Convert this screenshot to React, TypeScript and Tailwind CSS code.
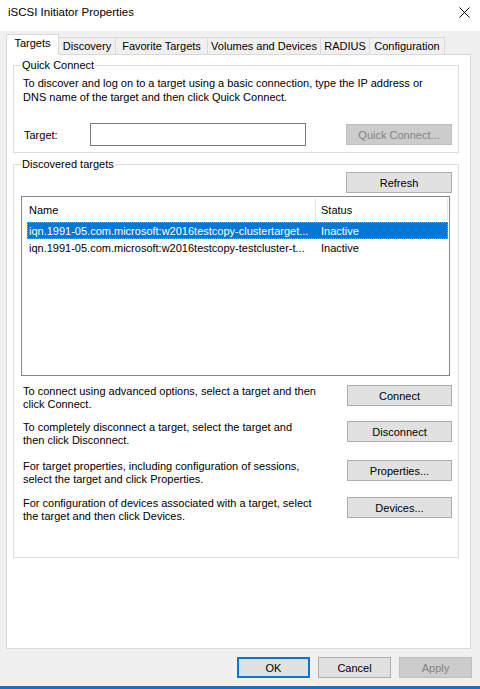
import React from "react";

function Btn({
  label,
  w = "w-[106px]",
  disabled = false,
  primary = false,
}: {
  label: string;
  w?: string;
  disabled?: boolean;
  primary?: boolean;
}) {
  const border = primary
    ? "border-2 border-[#0078d7]"
    : disabled
    ? "border border-[#bfbfbf]"
    : "border border-[#adadad]";
  const color = disabled ? "bg-[#cccccc] text-[#838383]" : "bg-[#e1e1e1] text-black";
  return (
    <div className={`flex items-center justify-center h-[21px] shrink-0 leading-[14px] ${w} ${border} ${color}`}>
      {label}
    </div>
  );
}

function ActionRow({ lines, label, mt }: { lines: string[]; label: string; mt: string }) {
  return (
    <div className={`flex items-start justify-between pr-[6px] ${mt}`}>
      <div className="leading-[13px] whitespace-nowrap">
        {lines.map((l, i) => (
          <div key={i}>{l}</div>
        ))}
      </div>
      <Btn label={label} w="w-[105px]" />
    </div>
  );
}

export default function App() {
  return (
    <div className="w-[480px] h-[689px] bg-[#f0f0f0] flex flex-col text-[11px] text-black font-['Liberation_Sans',Arial,sans-serif] overflow-hidden">
      {/* Title bar */}
      <div className="h-[31px] bg-white flex items-start justify-between pl-[8px] pr-[10px] pt-[5px] shrink-0">
        <span className="text-[11.5px] leading-[14px]">iSCSI Initiator Properties</span>
        <svg width="11" height="11" viewBox="0 0 11 11" className="mt-[2px]">
          <path d="M0.5 0.5L10.5 10.5M10.5 0.5L0.5 10.5" stroke="#000" strokeWidth="1" fill="none" />
        </svg>
      </div>

      {/* Tabs */}
      <div className="mt-[3px] h-[20px] flex items-end pl-[6px] shrink-0 leading-[14px]">
        <div className="relative z-10 -mb-px h-[21px] w-[53px] bg-white border border-b-0 border-[#d9d9d9] flex justify-center pt-[1px]">
          Targets
        </div>
        <div className="h-[17px] w-[57px] border-t border-r border-[#d9d9d9] flex justify-center pt-[1px]">Discovery</div>
        <div className="h-[17px] w-[92px] border-t border-r border-[#d9d9d9] flex justify-center pt-[1px]">Favorite Targets</div>
        <div className="h-[17px] w-[113px] border-t border-r border-[#d9d9d9] flex justify-center pt-[1px]">Volumes and Devices</div>
        <div className="h-[17px] w-[49px] border-t border-r border-[#d9d9d9] flex justify-center pt-[1px]">RADIUS</div>
        <div className="h-[17px] w-[75px] border-t border-r border-[#d9d9d9] flex justify-center pt-[1px]">Configuration</div>
      </div>

      {/* Panel */}
      <div className="ml-[6px] w-[465px] h-[595px] shrink-0 bg-white border border-[#d9d9d9] pt-[10px] pl-[6px]">
        {/* Quick Connect */}
        <div className="relative w-[446px] h-[88px] border border-[#dcdcdc]">
          <span className="absolute left-[7px] -top-[8px] bg-white px-[1px] leading-[14px]">Quick Connect</span>
          <div className="pt-[10px] pl-[9px] leading-[14px] whitespace-nowrap">
            <div>To discover and log on to a target using a basic connection, type the IP address or</div>
            <div>DNS name of the target and then click Quick Connect.</div>
          </div>
          <div className="mt-[19px] pl-[9px] flex items-start">
            <div className="w-[67px] pl-[1px] mt-[5px] leading-[14px]">Target:</div>
            <div className="w-[216px] h-[23px] border border-[#7a7a7a] bg-white" />
            <div className="ml-auto mr-[6px] mt-[1px]">
              <Btn label="Quick Connect..." disabled />
            </div>
          </div>
        </div>

        {/* Discovered targets */}
        <div className="relative mt-[11px] w-[446px] h-[394px] border border-[#dcdcdc]">
          <span className="absolute left-[7px] -top-[8px] bg-white px-[1px] leading-[14px]">Discovered targets</span>
          <div className="flex justify-end pr-[6px] pt-[7px]">
            <Btn label="Refresh" />
          </div>
          <div className="mt-[3px] ml-[7px] w-[429px] h-[180px] border border-[#828790] bg-white">
            <div className="h-[25px] flex items-start">
              <div className="w-[293px] h-[25px] pl-[7px] flex items-center leading-[14px]">Name</div>
              <div className="w-px h-[23px] mt-[1px] bg-[#e5e5e5]" />
              <div className="w-[131px] h-[25px] pl-[5px] flex items-center leading-[14px]">Status</div>
              <div className="w-px h-[23px] mt-[1px] bg-[#e5e5e5]" />
            </div>
            <div className="ml-[5px] w-[421px] h-[17px] bg-[#0078d7] text-white border border-dotted border-[#ff8728] flex items-center leading-[14px] whitespace-nowrap">
              <div className="w-[293px] pl-[1px] overflow-hidden">iqn.1991-05.com.microsoft:w2016testcopy-clustertarget...</div>
              <div className="pl-[0px]">Inactive</div>
            </div>
            <div className="ml-[5px] w-[421px] h-[17px] flex items-center leading-[14px] whitespace-nowrap">
              <div className="w-[294px] pl-[2px] overflow-hidden">iqn.1991-05.com.microsoft:w2016testcopy-testcluster-t...</div>
              <div>Inactive</div>
            </div>
          </div>

          <div className="pl-[9px]">
            <ActionRow
              mt="mt-[9px]"
              lines={["To connect using advanced options, select a target and then", "click Connect."]}
              label="Connect"
            />
            <ActionRow
              mt="mt-[10px]"
              lines={["To completely disconnect a target, select the target and", "then click Disconnect."]}
              label="Disconnect"
            />
            <ActionRow
              mt="mt-[13px]"
              lines={["For target properties, including configuration of sessions,", "select the target and click Properties."]}
              label="Properties..."
            />
            <ActionRow
              mt="mt-[11px]"
              lines={["For configuration of devices associated with a target, select", "the target and then click Devices."]}
              label="Devices..."
            />
          </div>
        </div>
      </div>

      {/* Bottom buttons */}
      <div className="mt-[8px] flex justify-end gap-[8px] pr-[8px] shrink-0">
        <Btn label="OK" w="w-[73px]" primary />
        <Btn label="Cancel" w="w-[73px]" />
        <Btn label="Apply" w="w-[73px]" disabled />
      </div>
      <div className="mt-[8px] h-[3px] bg-[#1a6fc0] shrink-0" />
    </div>
  );
}
